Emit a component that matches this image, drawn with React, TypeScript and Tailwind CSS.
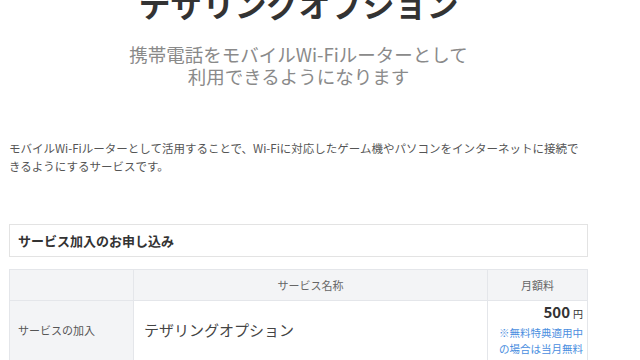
const font = { fontFamily: '"Noto Sans CJK JP", "Noto Sans", sans-serif' };

const App = () => {
    return (
        <div className="w-[640px] h-[360px] overflow-hidden bg-white" style={font}>
            <div className="w-[579px] ml-[9px]">
                <h1 className="-mt-[17px] text-center text-[32px] leading-[40px] font-bold text-[#333]">
                    テザリングオプション
                </h1>
                <p className="mt-[20px] text-center text-[18.5px] leading-[22px] text-[#8a8a8a]">
                    携帯電話をモバイルWi-Fiルーターとして
                    <br />
                    利用できるようになります
                </p>

                <p className="mt-[52px] text-[11.5px] leading-[18px] text-[#555] pr-[4px]">
                    モバイルWi-Fiルーターとして活用することで、Wi-Fiに対応したゲーム機やパソコンをインターネットに接続できるようにするサービスです。
                </p>

                <div className="mt-[49px] h-[33px] border border-[#e3e3e3] flex items-center px-[8px]">
                    <h2 className="text-[13px] font-bold text-[#333]">サービス加入のお申し込み</h2>
                </div>

                {/* 申し込みテーブル */}
                <table className="mt-[12px] w-full border-collapse text-[#555]">
                    <thead>
                        <tr className="bg-[#f3f4f6] h-[31px]">
                            <th className="w-[124px] border border-[#e4e6ea]"></th>
                            <th className="border border-[#e4e6ea] text-[11px] font-normal text-[#666]">サービス名称</th>
                            <th className="w-[100px] border border-[#e4e6ea] text-[11px] font-normal text-[#666]">月額料</th>
                        </tr>
                    </thead>
                    <tbody>
                        <tr className="h-[60px]">
                            <td className="bg-[#f3f4f6] border border-[#e4e6ea] pl-[8px] text-[11px] text-[#555]">サービスの加入</td>
                            <td className="border border-[#e4e6ea] pl-[10px] text-[15px] text-[#444]">テザリングオプション</td>
                            <td className="border border-[#e4e6ea] pr-[4px] text-right align-top pt-[1px]">
                                <div className="text-[#333] leading-[18px]">
                                    <span className="text-[15px] font-bold">500</span>
                                    <span className="text-[10px] ml-[3px]">円</span>
                                </div>
                                <div className="mt-[2px] text-[10.5px] leading-[16px] text-[#4a8ee0]">
                                    ※無料特典適用中
                                    <br />
                                    の場合は当月無料
                                </div>
                            </td>
                        </tr>
                    </tbody>
                </table>
            </div>
        </div>
    );
};

export default App;
